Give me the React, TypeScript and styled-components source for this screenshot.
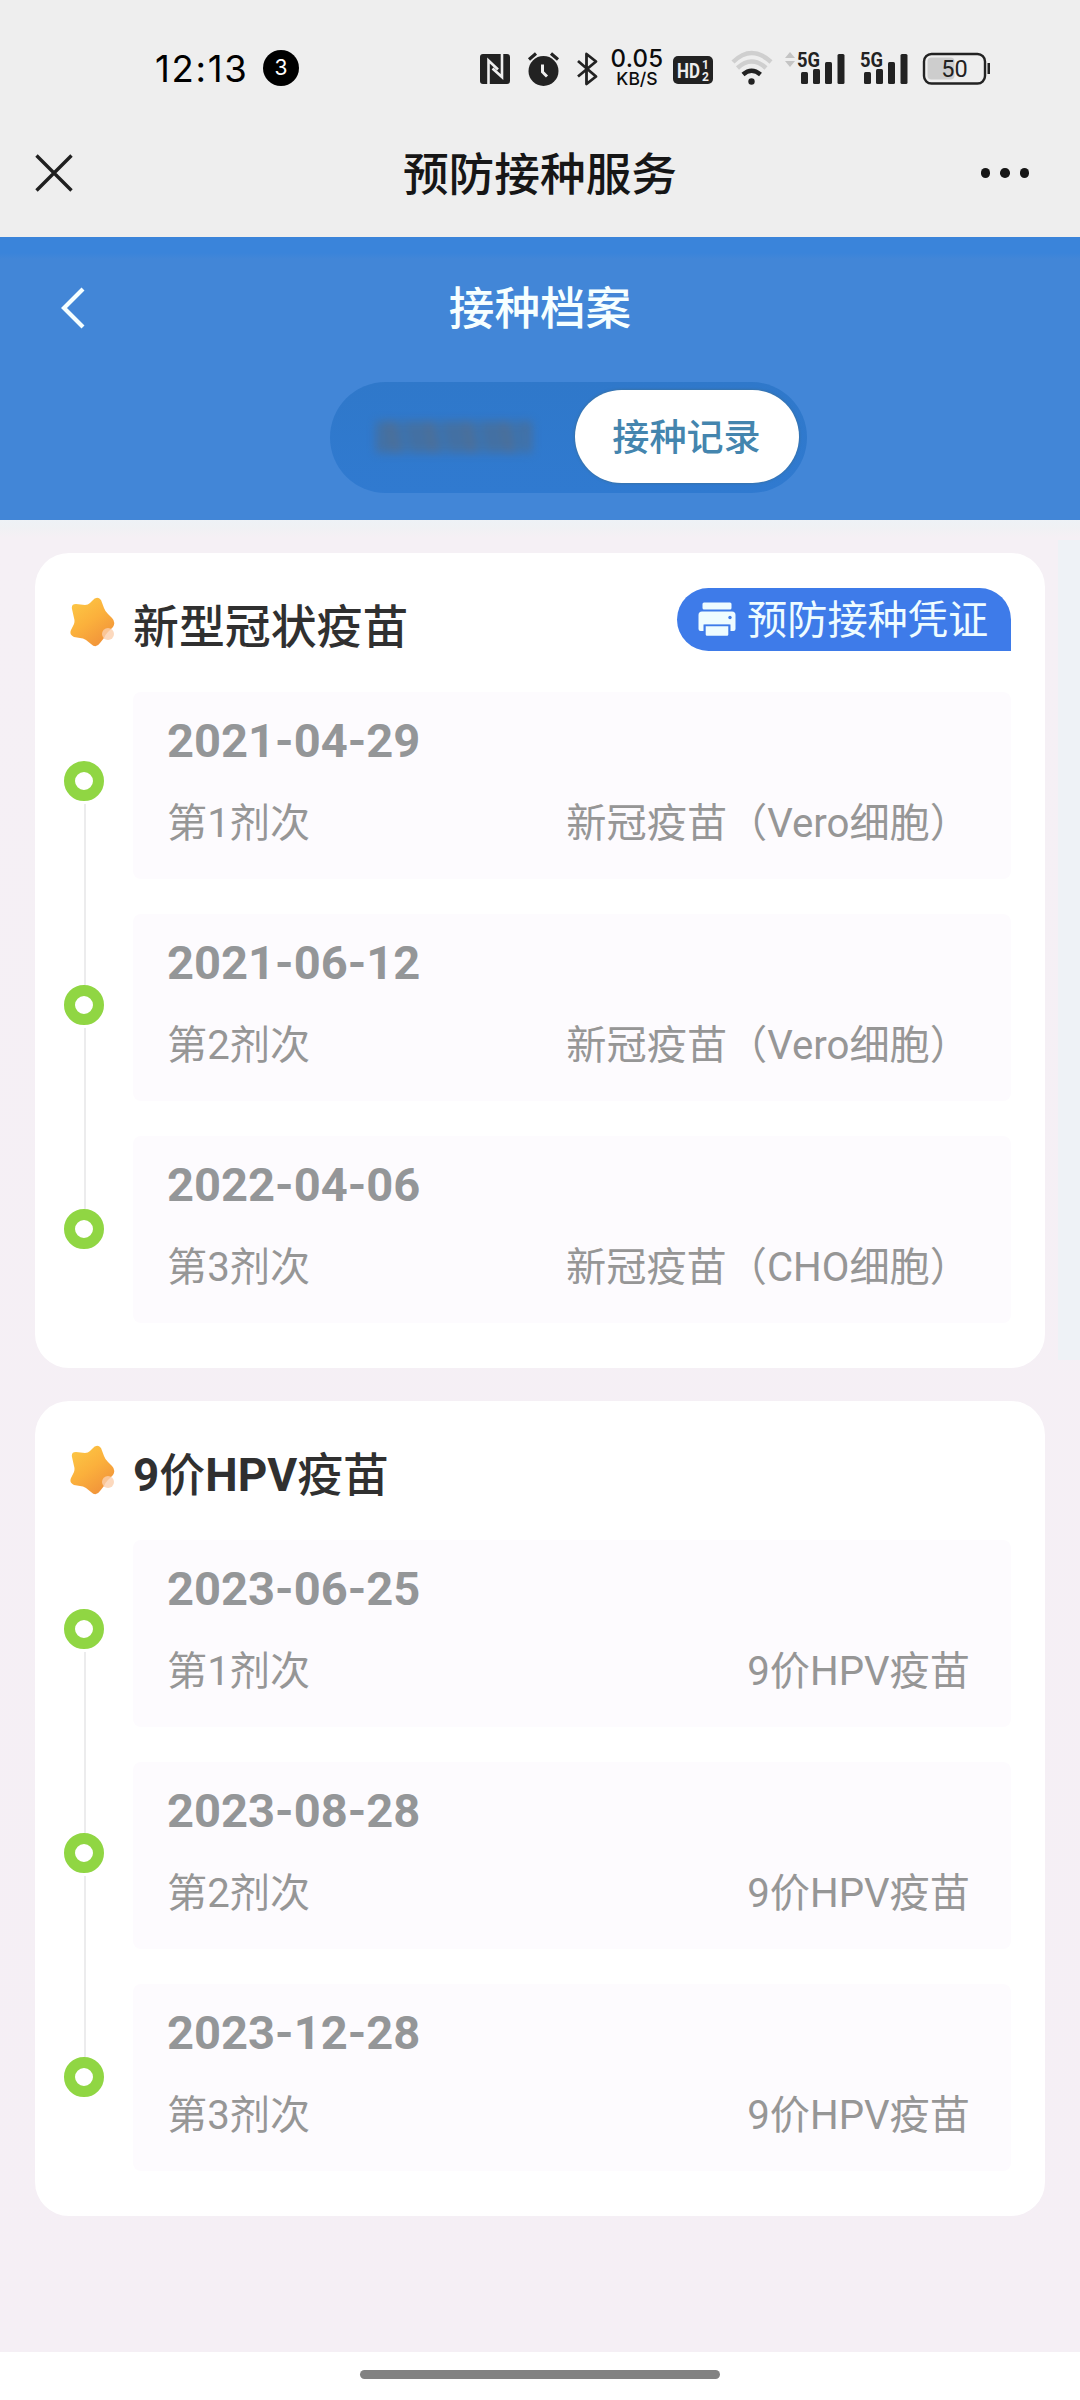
import React from 'react';
import styled, { createGlobalStyle } from 'styled-components';

const GlobalStyle = createGlobalStyle`
  *, *::before, *::after { box-sizing: border-box; }
  body { margin: 0; background: #ffffff; }
`;

const cjk = `Roboto, "Noto Sans CJK SC", sans-serif`;

const Screen = styled.div`
  width: 1080px;
  height: 2400px;
  display: flex;
  flex-direction: column;
  overflow: hidden;
  font-family: ${cjk};
  background: #ffffff;
`;

const StatusBar = styled.div`
  height: 138px;
  flex: none;
  display: flex;
  align-items: center;
  padding: 0 88px 0 155px;
  background: #eeeeee;
`;

const Clock = styled.span`
  width: 108px;
  font: 400 36.5px/40px Inter, sans-serif;
  letter-spacing: 1.7px;
  color: #000;
`;

const CountBadge = styled.span`
  width: 36px;
  height: 36px;
  margin-top: -2px;
  border-radius: 50%;
  background: #000;
  color: #fff;
  font: 400 21px/36px Inter, sans-serif;
  text-align: center;
`;

const StatusIcons = styled.div`
  margin-left: auto;
  display: flex;
  align-items: center;
`;

const Glyph = styled.svg<{ $gap?: number }>`
  display: block;
  flex: none;
  margin-left: ${(p) => p.$gap ?? 0}px;
  overflow: visible;
`;

const NetSpeed = styled.div`
  width: 58px;
  margin-left: 8px;
  display: flex;
  flex-direction: column;
  align-items: center;
  color: #0c0c0c;
  font-family: Inter, sans-serif;
  font-weight: 500;
`;

const SpeedValue = styled.span`
  font-size: 24px;
  line-height: 20px;
  letter-spacing: 0.3px;
`;

const SpeedUnit = styled.span`
  font-size: 17.5px;
  line-height: 20px;
`;

const NavBar = styled.div`
  height: 99px;
  flex: none;
  display: grid;
  grid-template-columns: 160px 1fr 160px;
  align-items: center;
  padding: 0 0 29px;
  background: #eeeeee;
`;

const NavLeft = styled.div`
  display: flex;
  padding-left: 35px;
`;

const NavRight = styled.div`
  display: flex;
  justify-content: flex-end;
  gap: 10px;
  padding-right: 51px;
`;

const MenuDot = styled.i`
  width: 9.5px;
  height: 9.5px;
  border-radius: 50%;
  background: #161616;
`;

const NavTitle = styled.h1`
  margin: 6px 0 0;
  text-align: center;
  font: 500 45.7px/60px ${cjk};
  color: #161616;
`;

const Hero = styled.header`
  height: 283px;
  flex: none;
  display: flex;
  flex-direction: column;
  align-items: center;
  background: linear-gradient(#3a84da 0, #3a84da 16px, #4286d7 22px);
`;

const HeroTop = styled.div`
  width: 100%;
  height: 145px;
  display: grid;
  grid-template-columns: 160px 1fr 160px;
  align-items: center;
`;

const BackButton = styled.div`
  padding-left: 59px;
`;

const HeroTitle = styled.h2`
  margin: 1px 0 0;
  text-align: center;
  font: 500 45.6px/60px ${cjk};
  color: #f6ffff;
`;

const Tabs = styled.div`
  width: 477px;
  height: 111px;
  margin-left: 56px;
  padding: 8px 8px 10px 0;
  display: flex;
  border-radius: 56px;
  background: linear-gradient(#2f78ca, #307ad0);
`;

const HiddenTab = styled.div`
  flex: 1;
  display: flex;
  align-items: center;
  justify-content: center;
  padding-left: 4px;
`;

const Smudge = styled.div`
  width: 156px;
  height: 32px;
  filter: blur(5px);
  opacity: 0.75;
  background: repeating-linear-gradient(
    78deg,
    #4d6d92 0 9px,
    #456f9b 9px 15px,
    #566c88 15px 25px,
    #4171a4 25px 37px
  );
`;

const ActiveTab = styled.div`
  width: 224px;
  border-radius: 47px;
  background: #fff;
  color: #4485ae;
  font: 500 37.1px/97px ${cjk};
  text-align: center;
  box-shadow: 0 0 2px 1px rgba(58, 112, 158, 0.7);
`;

const Content = styled.main`
  flex: none;
  height: 1832px;
  padding: 33px 35px 0;
  display: flex;
  flex-direction: column;
  gap: 33px;
  background:
    linear-gradient(#eef2f6, #eef2f6) 1058px 20px / 22px 820px no-repeat,
    linear-gradient(#eef2f6, #f0f1f4 8px, #f5f0f5 18px, #f5eff5);
`;

const Card = styled.section`
  height: 815px;
  flex: none;
  padding: 35px 34px 0 29px;
  border-radius: 34px;
  background: #fff;
`;

const CardHead = styled.div`
  height: 104px;
  display: flex;
  align-items: flex-start;
`;

const StarIcon = styled.svg`
  display: block;
  margin: 8px 0 0 4px;
`;

const CardTitle = styled.h3`
  margin: 9px 0 0 17px;
  font: 700 45.9px/60px Roboto, "Noto Sans CJK SC", sans-serif;
  color: #303030;
`;

const TitleCjk = styled.span`
  font-weight: 500;
`;

const Certificate = styled.div`
  width: 334px;
  height: 63px;
  margin-left: auto;
  display: flex;
  align-items: center;
  gap: 11px;
  padding-left: 21px;
  border-radius: 32px 32px 0 32px;
  background: #3e7be9;
  color: #eefcff;
  font: 400 40.2px/58px ${cjk};
`;

const CertificateText = styled.span`
  margin-top: 2px;
  white-space: nowrap;
`;

const Timeline = styled.div`
  display: flex;
`;

const Rail = styled.div`
  width: 40px;
  height: 488px;
  margin: 69px 29px 0 0;
  display: flex;
  flex-direction: column;
  align-items: center;
`;

const RailDot = styled.i`
  width: 40px;
  height: 40px;
  flex: none;
  border: 11.5px solid #90d643;
  border-radius: 50%;
  background: #fff;
`;

const RailLine = styled.i`
  width: 2px;
  flex: 1;
  margin: 3px 0 0 1px;
  background: #ececed;
`;

const Entries = styled.div`
  flex: 1;
  display: flex;
  flex-direction: column;
  gap: 35px;
`;

const Entry = styled.article`
  height: 187px;
  padding: 19px 41px 0 34px;
  border-radius: 8px;
  background: #fdfbfe;
`;

const EntryDate = styled.div`
  font: 700 47.1px/60px Roboto, sans-serif;
  color: #949698;
`;

const EntryRow = styled.div`
  margin-top: 25px;
  display: flex;
  justify-content: space-between;
  font: 400 40.2px/56px ${cjk};
  color: #969696;
`;

const HomeArea = styled.footer`
  flex: 1;
  display: flex;
  justify-content: center;
  padding-top: 18px;
  background: #fff;
`;

const HomeBar = styled.div`
  width: 360px;
  height: 9px;
  border-radius: 5px;
  background: #828282;
`;

const ink = '#222222';

const Signal = ({ left, arrows, gap }: { left: number; arrows?: boolean; gap: number }) => {
  const start = arrows ? left - 14 : left;
  const width = arrows ? 61 : 47;
  return (
    <Glyph $gap={gap} width={width} height="40" viewBox={`${start} 49 ${width} 40`}>
      {arrows && <path d={`M${left - 13} 58l5-6 5 6zM${left - 13} 61l5 6 5-6z`} fill="#c4c4c4" />}
      <text x={left - 1} y="67" fontFamily="Roboto, sans-serif" fontWeight="700" fontSize="21" textLength="23" lengthAdjust="spacingAndGlyphs" fill={ink}>5G</text>
      <g fill={ink}>
        <rect x={left + 3} y="72" width="7" height="12" rx="1.5" />
        <rect x={left + 15} y="69" width="7" height="15" rx="1.5" />
        <rect x={left + 27} y="62" width="7" height="22" rx="1.5" />
        <rect x={left + 39.5} y="54" width="7" height="30" rx="1.5" />
      </g>
    </Glyph>
  );
};

const Star = ({ id }: { id: string }) => (
  <StarIcon width="48" height="52" viewBox="0 0 48 52">
    <defs>
      <linearGradient id={id} x1="0.1" y1="0" x2="0.75" y2="1">
        <stop offset="0" stopColor="#fcc845" />
        <stop offset="0.5" stopColor="#fbb03c" />
        <stop offset="1" stopColor="#f0913a" />
      </linearGradient>
    </defs>
    <path
      d="M24 5Q29-1 33 4L36 12Q37 15 40 18L44 22Q48 26 45 31L40 36Q37 39 36 42L32 47Q28 53 23 48L18 44Q15 42 12 42L6 41Q1 39 3 34L6 28Q7 25 6 22L4 13Q3 8 8 8L17 9Q20 9 22 7Z"
      fill={`url(#${id})`}
    />
    <circle cx="40" cy="38" r="6" fill="#fbcfae" fillOpacity="0.8" />
  </StarIcon>
);

const Printer = () => (
  <svg width="38" height="35" viewBox="0 0 38 35">
    <rect x="4.5" y="0.5" width="29" height="7" rx="1.5" fill="#eefcff" />
    <path d="M4 9.5h30q3.5 0 3.5 3.5v14q0 2-2 2h-3v-6.500h-27v6.500h-3q-2 0-2-2v-14q0-3.500 3.500-3.500z" fill="#eefcff" />
    <circle cx="32" cy="15.5" r="1.7" fill="#3e7be9" />
    <path d="M7 23.500h24v9q0 2-2 2h-20q-2 0-2-2z" fill="#eefcff" stroke="#3e7be9" strokeWidth="1.4" />
  </svg>
);

type Dose = { date: string; dose: string; name: string };

const covid: Dose[] = [
  { date: '2021-04-29', dose: '第1剂次', name: '新冠疫苗（Vero细胞）' },
  { date: '2021-06-12', dose: '第2剂次', name: '新冠疫苗（Vero细胞）' },
  { date: '2022-04-06', dose: '第3剂次', name: '新冠疫苗（CHO细胞）' },
];

const hpv: Dose[] = [
  { date: '2023-06-25', dose: '第1剂次', name: '9价HPV疫苗' },
  { date: '2023-08-28', dose: '第2剂次', name: '9价HPV疫苗' },
  { date: '2023-12-28', dose: '第3剂次', name: '9价HPV疫苗' },
];

const VaccineCard = ({ id, title, doses, certificate }: { id: string; title: React.ReactNode; doses: Dose[]; certificate?: string }) => (
  <Card>
    <CardHead>
      <Star id={id} />
      <CardTitle>{title}</CardTitle>
      {certificate && (
        <Certificate>
          <Printer />
          <CertificateText>{certificate}</CertificateText>
        </Certificate>
      )}
    </CardHead>
    <Timeline>
      <Rail>
        {doses.map((d, i) => (
          <React.Fragment key={d.date}>
            {i > 0 && <RailLine />}
            <RailDot />
          </React.Fragment>
        ))}
      </Rail>
      <Entries>
        {doses.map((d) => (
          <Entry key={d.date}>
            <EntryDate>{d.date}</EntryDate>
            <EntryRow>
              <span>{d.dose}</span>
              <span>{d.name}</span>
            </EntryRow>
          </Entry>
        ))}
      </Entries>
    </Timeline>
  </Card>
);

export default function App() {
  return (
    <Screen>
      <GlobalStyle />
      <StatusBar>
        <Clock>12:13</Clock>
        <CountBadge>3</CountBadge>
        <StatusIcons>
          <Glyph width="30" height="40" viewBox="480 49 30 40">
            <rect x="480" y="54" width="30" height="30" rx="3" fill={ink} />
            <path d="M488.500 84V60.500L498 69.500M502 54V77L492.500 68.500" fill="none" stroke="#eeeeee" strokeWidth="2.6" />
          </Glyph>
          <Glyph $gap={18} width="32" height="40" viewBox="528 49 32 40">
            <circle cx="543.5" cy="71" r="15" fill={ink} />
            <path d="M529 59.500l7-6M558 59.500l-7-6" stroke={ink} strokeWidth="3.2" fill="none" />
            <path d="M542.500 64.500v7.500l4.500 4.500" stroke="#eeeeee" strokeWidth="3" fill="none" />
          </Glyph>
          <Glyph $gap={16} width="24" height="40" viewBox="576 49 24 40">
            <path d="M578 61l18 15.500-9.500 7.500V54l9.500 7.500L578 76.500" stroke={ink} strokeWidth="2.8" fill="none" strokeLinejoin="round" />
          </Glyph>
          <NetSpeed>
            <SpeedValue>0.05</SpeedValue>
            <SpeedUnit>KB/S</SpeedUnit>
          </NetSpeed>
          <Glyph $gap={7} width="40" height="40" viewBox="673 49 40 40">
            <rect x="673" y="56" width="40" height="28" rx="5" fill={ink} />
            <g fontFamily="Roboto, sans-serif" fontWeight="700" fill="#eeeeee">
              <text x="677" y="77.5" fontSize="21" textLength="23" lengthAdjust="spacingAndGlyphs">HD</text>
              <text x="702" y="69" fontSize="12">1</text>
              <text x="702" y="80.5" fontSize="12">2</text>
            </g>
          </Glyph>
          <Glyph $gap={19} width="40" height="40" viewBox="732 49 40 40">
            <g fill="none">
              <path d="M733 62Q751.500 44 771 62" stroke="#cfcfcf" strokeWidth="4.5" />
              <path d="M737.500 68Q751.500 55 766 68" stroke="#cfcfcf" strokeWidth="4.5" />
              <path d="M743 74.500Q751.500 67 760.500 74.500" stroke={ink} strokeWidth="4.5" />
            </g>
            <circle cx="751.5" cy="81.5" r="3.2" fill={ink} />
          </Glyph>
          <Signal gap={12} left={798} arrows />
          <Signal gap={16} left={861} />
          <Glyph $gap={14} width="70" height="40" viewBox="922 49 70 40">
            <rect x="927.5" y="57.5" width="27" height="22" rx="4" fill="#cdcdcd" />
            <rect x="924" y="54" width="61" height="29.5" rx="7.5" fill="none" stroke={ink} strokeWidth="2.4" />
            <rect x="987.5" y="63" width="2.5" height="11" fill={ink} />
            <text x="954.5" y="76.7" fontFamily="Roboto, sans-serif" fontSize="23.5" textAnchor="middle" fill={ink}>50</text>
          </Glyph>
        </StatusIcons>
      </StatusBar>

      <NavBar>
        <NavLeft>
          <svg width="38" height="38" viewBox="0 0 38 38">
            <path d="M1.500 1.500l35 35M36.500 1.500l-35 35" stroke="#202020" strokeWidth="3.4" />
          </svg>
        </NavLeft>
        <NavTitle>预防接种服务</NavTitle>
        <NavRight>
          <MenuDot />
          <MenuDot />
          <MenuDot />
        </NavRight>
      </NavBar>

      <Hero>
        <HeroTop>
          <BackButton>
            <svg width="28" height="42" viewBox="0 0 28 42">
              <path d="M24 2L5 21L24 40" fill="none" stroke="#f6ffff" strokeWidth="4.2" />
            </svg>
          </BackButton>
          <HeroTitle>接种档案</HeroTitle>
        </HeroTop>
        <Tabs>
          <HiddenTab>
            <Smudge />
          </HiddenTab>
          <ActiveTab>接种记录</ActiveTab>
        </Tabs>
      </Hero>

      <Content>
        <VaccineCard id="star-covid" title={<TitleCjk>新型冠状疫苗</TitleCjk>} doses={covid} certificate="预防接种凭证" />
        <VaccineCard
          id="star-hpv"
          title={<>9<TitleCjk>价</TitleCjk>HPV<TitleCjk>疫苗</TitleCjk></>}
          doses={hpv}
        />
      </Content>

      <HomeArea>
        <HomeBar />
      </HomeArea>
    </Screen>
  );
}
